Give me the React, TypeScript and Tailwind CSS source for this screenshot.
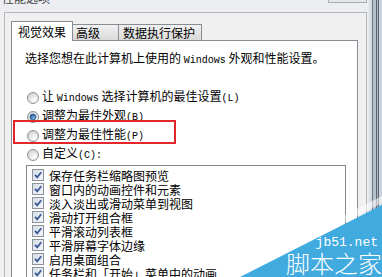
import React from 'react';

const effects = [
  '保存任务栏缩略图预览',
  '窗口内的动画控件和元素',
  '淡入淡出或滑动菜单到视图',
  '滑动打开组合框',
  '平滑滚动列表框',
  '平滑屏幕字体边缘',
  '启用桌面组合',
  '任务栏和「开始」菜单中的动画',
];

// half-width latin, like SimSun's 6px cells
const A = ({ children }: { children: React.ReactNode }) => (
  <span className="font-['Liberation_Mono',monospace] text-[10px]">{children}</span>
);

function Radio({ checked }: { checked?: boolean }) {
  return (
    <svg width="12" height="12" viewBox="0 0 12 12" className="shrink-0">
      <defs>
        <radialGradient id={checked ? 'rg1' : 'rg0'} cx="0.65" cy="0.7" r="0.7">
          <stop offset="0" stopColor="#ffffff" />
          <stop offset="1" stopColor="#d2d4d6" />
        </radialGradient>
        <radialGradient id="dot" cx="0.6" cy="0.65" r="0.7">
          <stop offset="0" stopColor="#7fb4e6" />
          <stop offset="1" stopColor="#1b4f8c" />
        </radialGradient>
      </defs>
      <circle cx="6" cy="6" r="5.5" fill={`url(#${checked ? 'rg1' : 'rg0'})`} stroke="#8d9195" />
      {checked && <circle cx="6" cy="6" r="3" fill="url(#dot)" stroke="#23497a" strokeWidth="0.6" />}
    </svg>
  );
}

function Check() {
  return (
    <svg width="12" height="12" viewBox="0 0 12 12" className="shrink-0">
      <defs>
        <linearGradient id="cb" x1="0" y1="0" x2="1" y2="1">
          <stop offset="0" stopColor="#d5dce6" />
          <stop offset="1" stopColor="#f6f8fa" />
        </linearGradient>
      </defs>
      <rect x="0.5" y="0.5" width="11" height="11" fill="url(#cb)" stroke="#8e9399" />
      <path d="M3 5.8 L5.2 8.4 L9.2 3.2" fill="none" stroke="#3b5a98" strokeWidth="1.8" />
    </svg>
  );
}

export default function App() {
  return (
    <div className="w-[382px] h-[277px] overflow-hidden relative flex bg-[#f0f0f0] text-[12px] text-black font-['Noto_Sans_CJK_SC',sans-serif]">
      <div className="w-[367px] flex flex-col">
        {/* title bar remains */}
        <div className="h-[12px] shrink-0 flex items-start bg-[#eceef1] overflow-hidden">
          <span className="ml-[2px] -mt-[9px] leading-[14px] text-[#444]">性能选项</span>
          <div className="ml-auto w-[39px] h-[3px] border border-t-0 border-[#a8adb3] bg-[#e4e7ea]" />
        </div>

        <div className="flex-1 ml-[4px] border-l border-t border-r border-[#b4b7bb] flex flex-col">
          {/* tabs */}
          <div className="mt-[8px] ml-[6px] h-[20px] -mb-px flex items-end relative z-10">
            <div className="w-[62px] h-[20px] bg-white border border-b-0 border-[#898c95] flex items-center justify-center leading-none">
              视觉效果
            </div>
            <div className="w-[46px] h-[16px] mb-px border border-l-0 border-b-0 border-[#898c95] bg-gradient-to-b from-[#f2f2f2] to-[#d9d9d9] flex items-center pl-[3px] leading-none">
              高级
            </div>
            <div className="w-[83px] h-[16px] mb-px border border-l-0 border-b-0 border-[#898c95] bg-gradient-to-b from-[#f2f2f2] to-[#d9d9d9] flex items-center pl-[4px] leading-none">
              数据执行保护
            </div>
          </div>

          {/* panel */}
          <div className="flex-1 ml-[6px] mr-[8px] bg-white border border-[#898c95] flex flex-col">
            <div className="pl-[13px] pt-[10px] leading-[14px] whitespace-nowrap">
              选择您想在此计算机上使用的 <A>Windows</A> 外观和性能设置。
            </div>

            <div className="mt-[20px] pl-[15px] flex flex-col leading-[14px]">
              <div className="h-[19px] flex items-center gap-[3px] whitespace-nowrap">
                <Radio />
                <span>让 <A>Windows</A> 选择计算机的最佳设置<A>(L)</A></span>
              </div>
              <div className="h-[19px] flex items-center gap-[3px]">
                <Radio checked />
                <span>调整为最佳外观<A>(B)</A></span>
              </div>
              <div className="h-[19px] flex items-center gap-[3px]">
                <Radio />
                <span>调整为最佳性能<A>(P)</A></span>
              </div>
              <div className="h-[19px] flex items-center gap-[3px]">
                <Radio />
                <span>自定义<A>(C):</A></span>
              </div>
            </div>

            <div className="mt-[1px] ml-[14px] w-[320px] flex-1 border border-[#828790] pt-[2px] pl-[5px]">
              {effects.map((e) => (
                <div key={e} className="h-[14px] flex items-center gap-[5px] whitespace-nowrap leading-[14px]">
                  <Check />
                  <span className="leading-[13px]">{e}</span>
                </div>
              ))}
            </div>
          </div>
        </div>
      </div>

      {/* window frame edge */}
      <div className="w-[15px] flex">
        <div className="w-[5px] bg-gradient-to-r from-[#eef1f4] to-[#ccd5df]" />
        <div className="w-[1px] bg-[#6f7882]" />
        <div className="w-[3px] bg-[#b6c1ce]" />
        <div className="w-[1px] bg-[#5d6670]" />
        <div className="w-[1px] bg-[#a9b5c2]" />
        <div className="w-[1px] bg-[#5d6670]" />
        <div className="w-[3px] bg-[#cbd4de]" />
      </div>

      {/* red highlight annotation */}
      <div className="absolute left-[13px] top-[120px] w-[163px] h-[24px] border-2 border-[#e2262b]" />

      {/* watermark */}
      <svg className="absolute left-0 top-0" width="382" height="277" viewBox="0 0 382 277">
        <polygon points="222,277 382,196 382,203 240,277" fill="#ffffff" opacity="0.55" />
        <polygon points="240,277 382,205 382,277" fill="#41abe0" />
      </svg>
      <div className="absolute right-[4px] top-[236px] text-white text-[13px] leading-[13px] font-['Liberation_Mono',monospace]">
        jb51.net
      </div>
      <div className="absolute right-0 top-[251px] text-white text-[24px] leading-[24px] font-light">
        脚本之家
      </div>
    </div>
  );
}
